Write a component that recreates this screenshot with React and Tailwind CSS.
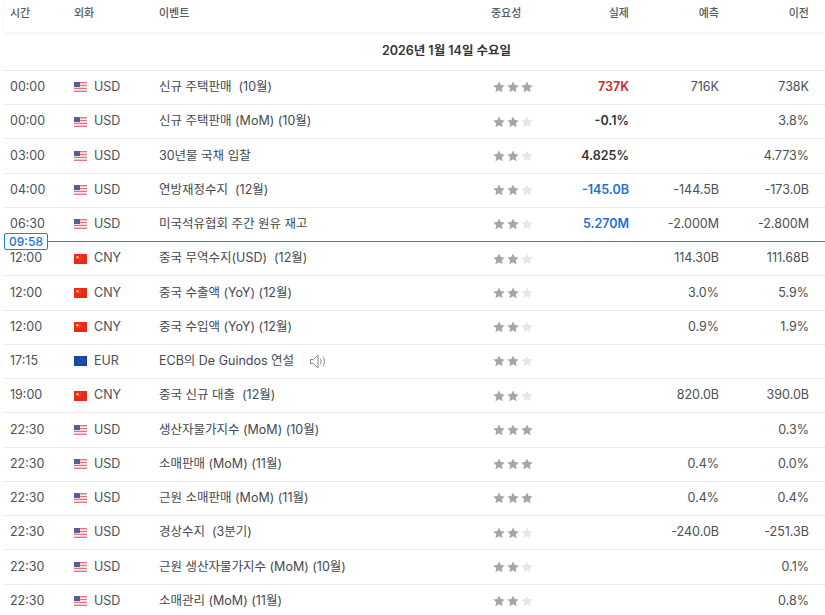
import React from "react";

const rows = [
  { time: "00:00", cur: "USD", event: "신규 주택판매  (10월)", stars: 3, actual: "737K", tone: "text-[#c9291f]", fc: "716K", prev: "738K" },
  { time: "00:00", cur: "USD", event: "신규 주택판매 (MoM) (10월)", stars: 2, actual: "-0.1%", tone: "text-[#333]", fc: "", prev: "3.8%" },
  { time: "03:00", cur: "USD", event: "30년물 국채 입찰", stars: 2, actual: "4.825%", tone: "text-[#333]", fc: "", prev: "4.773%" },
  { time: "04:00", cur: "USD", event: "연방재정수지  (12월)", stars: 2, actual: "-145.0B", tone: "text-[#1a73d1]", fc: "-144.5B", prev: "-173.0B" },
  { time: "06:30", cur: "USD", event: "미국석유협회 주간 원유 재고", stars: 2, actual: "5.270M", tone: "text-[#1a73d1]", fc: "-2.000M", prev: "-2.800M", now: true },
  { time: "12:00", cur: "CNY", event: "중국 무역수지(USD)  (12월)", stars: 2, fc: "114.30B", prev: "111.68B" },
  { time: "12:00", cur: "CNY", event: "중국 수출액 (YoY) (12월)", stars: 2, fc: "3.0%", prev: "5.9%" },
  { time: "12:00", cur: "CNY", event: "중국 수입액 (YoY) (12월)", stars: 2, fc: "0.9%", prev: "1.9%" },
  { time: "17:15", cur: "EUR", event: "ECB의 De Guindos 연설", stars: 2, speech: true },
  { time: "19:00", cur: "CNY", event: "중국 신규 대출  (12월)", stars: 2, fc: "820.0B", prev: "390.0B" },
  { time: "22:30", cur: "USD", event: "생산자물가지수 (MoM) (10월)", stars: 3, prev: "0.3%" },
  { time: "22:30", cur: "USD", event: "소매판매 (MoM) (11월)", stars: 3, fc: "0.4%", prev: "0.0%" },
  { time: "22:30", cur: "USD", event: "근원 소매판매 (MoM) (11월)", stars: 3, fc: "0.4%", prev: "0.4%" },
  { time: "22:30", cur: "USD", event: "경상수지  (3분기)", stars: 2, fc: "-240.0B", prev: "-251.3B" },
  { time: "22:30", cur: "USD", event: "근원 생산자물가지수 (MoM) (10월)", stars: 2, prev: "0.1%" },
  { time: "22:30", cur: "USD", event: "소매관리 (MoM) (11월)", stars: 2, prev: "0.8%" },
];

function Flag({ cur }) {
  if (cur === "CNY") {
    return (
      <svg width="13" height="10" viewBox="0 0 13 10" className="shrink-0">
        <rect width="13" height="10" fill="#e8291c" />
        <circle cx="3.4" cy="3.2" r="1.3" fill="#f7d23e" />
        <circle cx="6" cy="1.8" r="0.4" fill="#f7d23e" />
        <circle cx="6.4" cy="3.4" r="0.4" fill="#f7d23e" />
        <circle cx="5.6" cy="5" r="0.4" fill="#f7d23e" />
      </svg>
    );
  }
  if (cur === "EUR") {
    return (
      <svg width="13" height="10" viewBox="0 0 13 10" className="shrink-0">
        <rect width="13" height="10" fill="#1546a8" />
        <circle cx="6.5" cy="5" r="2.6" fill="none" stroke="#7d8f7a" strokeWidth="0.7" strokeDasharray="0.8 0.8" />
      </svg>
    );
  }
  return (
    <svg width="13" height="10" viewBox="0 0 13 10" className="shrink-0">
      <rect width="13" height="10" fill="#fff" />
      <rect y="0" width="13" height="1.4" fill="#e4737f" />
      <rect y="2.85" width="13" height="1.4" fill="#e4737f" />
      <rect y="5.7" width="13" height="1.4" fill="#e4737f" />
      <rect y="8.6" width="13" height="1.4" fill="#e4737f" />
      <rect width="6" height="5" fill="#545f96" />
    </svg>
  );
}

function Star({ on }) {
  return (
    <svg width="12" height="12" viewBox="0 0 24 24" fill={on ? "#a3a6ab" : "#e6e7e9"}>
      <path d="M12 1l3.5 7.2 7.9 1-5.8 5.4 1.5 7.9L12 18.7l-7.1 3.8 1.5-7.9L.6 9.2l7.9-1z" />
    </svg>
  );
}

function Speaker() {
  return (
    <svg width="16" height="15" viewBox="0 0 16 15" fill="none" stroke="#777" strokeWidth="0.9" className="ml-[16px] shrink-0">
      <path d="M.5 5.5h3L8 1v13L3.5 9.5h-3z" />
      <path d="M10.2 4.5c1.2 1.8 1.2 4.2 0 6" />
      <path d="M12.8 2.5c2.2 3 2.2 7 0 10" />
    </svg>
  );
}

function Row({ r }) {
  return (
    <div className="relative flex h-[34.25px] items-center border-b border-b-[#e8eaed] text-[12.5px] text-[#4b4f56]">
      <div className="w-[70px] pl-[6px]">{r.time}</div>
      <div className="flex w-[85px] items-center gap-[7px]">
        <Flag cur={r.cur} />
        <span>{r.cur}</span>
      </div>
      <div className="flex w-[334px] items-center whitespace-pre text-[#45494f]">
        {r.event}
        {r.speech && <Speaker />}
      </div>
      <div className="flex w-[60px] gap-[2px]">
        {[0, 1, 2].map((i) => (
          <Star key={i} on={i < r.stars} />
        ))}
      </div>
      <div className={`w-[76px] text-right font-semibold ${r.tone || ""}`}>{r.actual}</div>
      <div className="w-[90px] text-right">{r.fc}</div>
      <div className="w-[90px] text-right">{r.prev}</div>
      {r.now && (
        <>
          <div className="absolute right-0 bottom-[-1px] left-0 z-10 h-px bg-[#1a86d6]" />
          <div className="absolute bottom-[-9px] left-0 z-10 flex h-[17px] w-[44px] items-center justify-center rounded-[2px] border border-[#1a86d6] bg-white text-[12px] font-medium text-[#1a73d1]">
            09:58
          </div>
        </>
      )}
    </div>
  );
}

export default function App() {
  return (
    <div className="h-[615px] w-[825px] overflow-hidden bg-white pl-[4px] font-['Inter','Noto_Sans_CJK_KR',sans-serif]">
      <div className="flex h-[32px] items-center pb-[5px] text-[11px] font-medium text-[#555a60] shadow-[0_2px_4px_rgba(0,0,0,0.06)]">
        <div className="w-[70px] pl-[6px]">시간</div>
        <div className="w-[85px]">외화</div>
        <div className="w-[332px]">이벤트</div>
        <div className="w-[62px]">중요성</div>
        <div className="w-[76px] text-right">실제</div>
        <div className="w-[90px] text-right">예측</div>
        <div className="w-[90px] text-right">이전</div>
      </div>
      <div className="flex h-[38.75px] items-center justify-center border-b border-[#e8eaed] pl-[64px] text-[12.5px] font-semibold text-[#333]">
        2026년 1월 14일 수요일
      </div>
      {rows.map((r, i) => (
        <Row key={i} r={r} />
      ))}
    </div>
  );
}
